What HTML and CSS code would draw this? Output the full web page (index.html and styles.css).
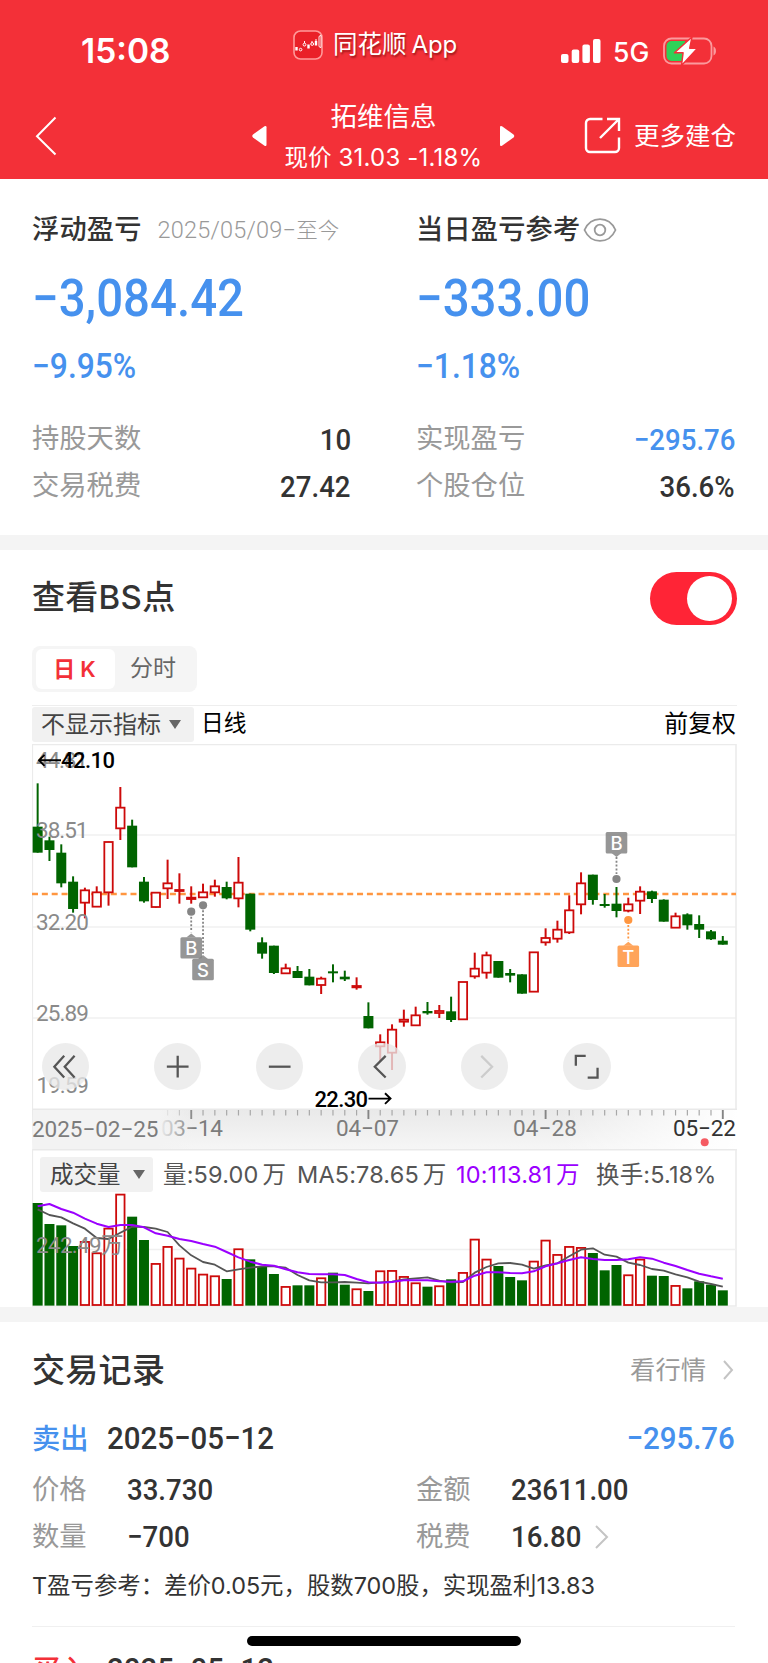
FILE: index.html
```html
<!DOCTYPE html>
<html lang="zh-CN">
<head>
<meta charset="utf-8">
<title>拓维信息</title>
<link rel="stylesheet" href="styles.css">
</head>
<body>
<div class="screen">
  <header class="top">
    <div class="status">
      <span class="clock">15:08</span>
      <div class="app">
        <svg class="app-icon" viewBox="0 0 30 30"><rect x="1" y="1" width="28" height="28" rx="6.5" fill="#ea2028" stroke="#ff9a9a" stroke-width="1.600"/><path d="M3.500 17v3.500M15.500 14.500v4M23 11v4.500" stroke="#fff" stroke-width="2.400"/><path d="M11.500 11v2M19 11v2M23 9v2" stroke="#fff" stroke-width="1"/><circle cx="7.600" cy="19.600" r="1.300" fill="none" stroke="#fff"/><circle cx="11.500" cy="14.600" r="1.400" fill="none" stroke="#fff"/><circle cx="19.200" cy="14" r="1.400" fill="none" stroke="#fff"/><path d="M26 7v9q0 1.500 2 1.500V5.500Q26 5.500 26 7" stroke="#fff" stroke-width=".9" fill="none"/></svg>
        <span>同花顺<b class="latin">App</b></span>
      </div>
      <svg class="signal" viewBox="0 0 40 24"><g fill="#fff"><rect x="0" y="15" width="7.500" height="9" rx="2"/><rect x="10.700" y="10.500" width="7.500" height="13.500" rx="2"/><rect x="21.400" y="5.500" width="7.500" height="18.500" rx="2"/><rect x="32" y="0" width="7.500" height="24" rx="2"/></g></svg>
      <span class="net">5G</span>
      <svg class="battery" viewBox="0 0 54 28"><rect x="1" y="1.500" width="47.500" height="25" rx="7.500" fill="none" stroke="#fb9a9d" stroke-width="1.800"/><path d="M50.500 9.500c3.300 1.400 3.300 7.600 0 9z" fill="#fb9a9d"/><path d="M8.500 4H22v20H8.500A5 5 0 0 1 3.500 19V9a5 5 0 0 1 5-5z" fill="#30d158"/><path d="M29 0 11.500 15.800h8.600L18.500 28.500l16-17.300h-7.800z" fill="#fff" stroke="#f33038" stroke-width="1.400" stroke-linejoin="round"/></svg>
    </div>
    <nav class="nav">
      <svg class="back" viewBox="0 0 22 40"><path d="M20.500 1.500 2 20.200l18.500 18.300" fill="none" stroke="#fff" stroke-width="2"/></svg>
      <svg class="prev" viewBox="0 0 17 22"><path d="M13.500 1.300 2 9.500q-1.500 1.500 0 3l11.500 8.200q2 1 2-1V2.300q0-2-2-1z" fill="#fff"/></svg>
      <div class="title"><div class="name">拓维信息</div><div class="price">现价<span class="latin"> 31.03 -1.18%</span></div></div>
      <svg class="next" viewBox="0 0 17 22"><path d="M3 1.300 14.500 9.500q1.500 1.500 0 3L3 20.700q-2 1-2-1V2.300q0-2 2-1z" fill="#fff"/></svg>
      <svg class="share" viewBox="0 0 38 38"><path d="M18.500 2H6a4 4 0 0 0-4 4v25a4 4 0 0 0 4 4h25a4 4 0 0 0 4-4V20.500M23 2h12v12M35 2 16 21" fill="none" stroke="#fff" stroke-width="2.400"/></svg>
      <span class="more">更多建仓</span>
    </nav>
  </header>

  <section class="summary">
    <div class="col">
      <div class="head"><span class="label">浮动盈亏</span><span class="period">2025/05/09−<span class="cjk">至今</span></span></div>
      <div class="big">−3,084.42</div>
      <div class="pct">−9.95%</div>
      <div class="kv first"><span>持股天数</span><b>10</b></div>
      <div class="kv"><span>交易税费</span><b>27.42</b></div>
    </div>
    <div class="col">
      <div class="head"><span class="label">当日盈亏参考</span><svg class="eye" viewBox="0 0 34 26"><path d="M1.500 13C8-1.500 26-1.500 32.500 13 26 27.500 8 27.500 1.500 13z" fill="none" stroke="#999" stroke-width="1.800"/><circle cx="17" cy="13" r="5.300" fill="none" stroke="#999" stroke-width="1.800"/></svg></div>
      <div class="big">−333.00</div>
      <div class="pct">−1.18%</div>
      <div class="kv first"><span>实现盈亏</span><b class="blue">−295.76</b></div>
      <div class="kv"><span>个股仓位</span><b>36.6%</b></div>
    </div>
  </section>

  <section class="bs">
    <div class="bs-head"><h2>查看BS点</h2><div class="toggle"><i></i></div></div>
    <div class="tabs"><span class="tab on">日<b>K</b></span><span class="tab">分时</span></div>
    <div class="bar">
      <span class="select">不显示指标<i class="caret"></i></span><span class="kind">日线</span><span class="adjust">前复权</span>
    </div>
    <div class="chart">
      <svg id="kline" width="705" height="405" viewBox="32 744 705 405"></svg>
      <div class="tools">
        <span class="tool"><svg viewBox="0 0 48 48"><path d="M22.500 13 12.500 24l10 11M33 13 23 24l10 11"/></svg></span>
        <span class="tool"><svg viewBox="0 0 48 48"><path d="M13 24h22M24 13v22"/></svg></span>
        <span class="tool"><svg viewBox="0 0 48 48"><path d="M13 24h22"/></svg></span>
        <span class="tool"><svg viewBox="0 0 48 48"><path d="M28 13 17 24l11 11"/></svg></span>
        <span class="tool off"><svg viewBox="0 0 48 48"><path d="M20.500 13 31.500 24l-11 11"/></svg></span>
        <span class="tool"><svg viewBox="0 0 48 48"><path d="M13 23V13h10M35 25v10H25"/></svg></span>
      </div>
    </div>
    <div class="volume">
      <svg id="vol" width="705" height="158" viewBox="32 1149 705 158"></svg>
      <div class="legend">
        <span class="select small">成交量<i class="caret"></i></span>
        <span class="l1">量:59.00<em>万</em></span><span class="l2">MA5:78.65<em>万</em></span><span class="l3">10:113.81<em>万</em></span><span class="l4">换手:5.18%</span>
      </div>
    </div>
  </section>

  <section class="records">
    <div class="rec-head"><h2>交易记录</h2><span class="link">看行情</span><svg class="chev" viewBox="0 0 12 20"><path d="M2 1l8 9-8 9"/></svg></div>
    <div class="deal"><span class="side">卖出</span><span class="date">2025−05−12</span><span class="gain">−295.76</span></div>
    <div class="pair"><div><span>价格</span><b>33.730</b></div><div><span>金额</span><b>23611.00</b></div></div>
    <div class="pair"><div><span>数量</span><b>−700</b></div><div><span>税费</span><b class="fee">16.80</b><svg class="chev big-chev" viewBox="0 0 15 24"><path d="M2 1l11 11L2 23"/></svg></div></div>
    <p class="note">T盈亏参考：差价0.05元，股数700股，实现盈利13.83</p>
    <div class="deal next-deal"><span class="side buy">买入</span><span class="date">2025−05−12</span></div>
  </section>
  <div class="home"></div>
</div>
<script src="chart.js"></script>
</body>
</html>
```

FILE: chart.js
```js
// Each candle: direction, high, body top, body bottom, low (thirds of a pixel below the chart origin)
const candles = [
['g',145,275,353,353],['g',305,316,345,378],['g',328,353,445,457],['g',424,440,522,533],['r',458,466,503,550],
['r',454,472,515,515],['r',320,321,472,512],['r',156,218,280,315],['g',254,272,397,397],['g',426,440,499,503],
['r',472,473,516,518],['r',374,445,460,492],['r',415,465,468,506],['r',454,488,492,506],['r',446,472,487,489],
['r',434,454,472,485],['g',440,456,490,493],['r',366,443,490,517],['g',476,476,584,589],['g',607,622,656,671],
['g',632,632,714,717],['r',686,700,715,715],['g',693,708,729,729],['g',702,725,751,751],['r',725,731,750,777],
['g',688,709,715,742],['g',707,725,733,738],['r',727,753,757,764],['g',802,843,880,880],['r',898,922,934,980],
['r',868,884,953,1005],['r',824,854,860,875],['r',815,841,871,871],['g',801,828,835,839],['r',810,828,834,849],
['g',785,829,855,861],['r',741,741,853,853],['r',653,701,724,731],['r',650,661,713,731],['g',678,678,728,728],
['g',702,714,722,742],['g',718,718,776,776],['r',651,652,770,770],['r',580,609,622,632],['r',557,584,611,623],
['r',481,526,592,597],['r',412,445,508,538],['g',419,419,495,509],['g',477,507,513,518],['g',456,506,528,547],
['r',488,508,527,532],['r',454,470,497,537],['g',467,469,492,504],['g',493,494,560,560],['r',533,544,578,578],
['g',535,538,571,584],['g',541,567,584,609],['g',585,589,613,615],['g',603,617,629,629]];
const volTop = [189,252,256,318,304,338,264,162,230,300,370,319,354,384,402,407,417,326,358,378,402,439,436,436,413,398,434,446,453,392,391,409,428,440,437,418,397,297,357,378,411,421,363,300,343,319,322,339,391,375,404,357,407,408,436,445,424,434,451];
const ma5 = [208,225,232,250,266,294,297,278,260,261,266,276,316,346,366,374,394,388,383,379,379,383,405,421,427,427,426,428,430,427,425,418,415,412,422,427,426,398,381,370,369,374,386,376,370,349,329,325,344,350,368,375,387,392,403,412,425,432,440];
const ma10 = [199,192,207,218,236,251,261,255,255,262,280,287,297,303,312,320,336,352,365,374,377,388,397,402,403,403,405,417,427,428,426,421,421,421,424,425,424,407,397,397,399,400,394,379,370,360,352,357,360,360,358,352,356,368,378,390,401,409,416];

const GREEN = '#006400', RED = '#cd0a0a';
const cx = i => +(37.65 + i * 11.813).toFixed(2);
const py = v => +(735 + v / 3).toFixed(2);
const vy = v => +(1140 + v / 3).toFixed(2);
const line = (x1, y1, x2, y2, s, w = 1.5, extra = '') => `<line x1="${x1}" y1="${y1}" x2="${x2}" y2="${y2}" stroke="${s}" stroke-width="${w}" ${extra}/>`;
const text = (x, y, w, s, cls) => `<text x="${x}" y="${y}" textLength="${w}" class="${cls}">${s}</text>`;

let k = `<defs>
<linearGradient id="axv" x1="0" y1="0" x2="0" y2="1"><stop offset="0" stop-color="#e9e9e9"/><stop offset="1" stop-color="#f6f6f6"/></linearGradient>
<linearGradient id="fadeL"><stop offset="0" stop-color="#f3f3f3"/><stop offset=".78" stop-color="#f3f3f3"/><stop offset="1" stop-color="#f3f3f3" stop-opacity="0"/></linearGradient>
<linearGradient id="fadeR"><stop offset="0" stop-color="#fff" stop-opacity="0"/><stop offset="1" stop-color="#fff"/></linearGradient></defs>`;
k += '<rect x="32" y="1109" width="705" height="41" fill="url(#axv)"/>';
k += '<rect x="560" y="1109" width="177" height="41" fill="url(#fadeR)"/>';
for (const y of [835, 927, 1018]) k += line(32, y, 736, y, '#f1f1f1', 1.7);
k += '<path d="M32.300 1109.500V744.500H736V1109.500" fill="none" stroke="#ebebeb" stroke-width="1.600"/>' + line(32, 1109.3, 737, 1109.3, '#e9e9e9', 1.5);
k += line(32, 894, 736, 894, '#ff9640', 2.3, 'stroke-dasharray="6 3.85"');
candles.forEach(([c, h, t, b, l], i) => {
  const x = cx(i);
  if (c === 'g') {
    k += line(x, py(h), x, py(l), GREEN, 2);
    k += `<rect x="${x - 5}" y="${py(t)}" width="10" height="${Math.max((b - t) / 3, 1.8)}" fill="${GREEN}"/>`;
  } else {
    if (h < t) k += line(x, py(h), x, py(t), RED, 2);
    if (l > b) k += line(x, py(b), x, py(l), RED, 2);
    k += `<rect x="${x - 4.2}" y="${py(t)}" width="8.400" height="${(b - t) / 3}" fill="#fff" stroke="${RED}" stroke-width="1.800"/>`;
  }
});
k += text(36, 768, 52, '44.81', 'lab') + text(36, 838.2, 52.5, '38.51', 'lab') + text(36, 930, 53, '32.20', 'lab') + text(36, 1021.2, 53, '25.89', 'lab') + text(36.5, 1093.3, 52.5, '19.59', 'lab');
k += '<path d="M61 760.300H39M44.500 754.800 39 760.300l5.500 5.500" fill="none" stroke="#000" stroke-width="1.900"/>' + text(61, 768.3, 54, '42.10', 'ext');
k += '<path d="M368.500 1098.600H390.500M385 1093.300l5.500 5.300-5.500 5.300" fill="none" stroke="#000" stroke-width="1.900"/>' + text(314.5, 1106.9, 53.5, '22.30', 'ext');

const marker = (x, dotY, boxY, ch, color, down) => {
  const from = down ? boxY + 25 : dotY + 5, to = down ? dotY - 5 : boxY - 5;
  const tip = down ? `M${x - 5} ${boxY + 21}l5 4 5-4z` : `M${x - 5} ${boxY + .2}l5-4 5 4z`;
  return `<circle cx="${x}" cy="${dotY}" r="4.100" fill="${color}"/>` + line(x, from, x, to, color, 1.8, 'stroke-dasharray="2 1.8"') +
    `<g opacity=".86"><rect x="${x - 10.8}" y="${boxY}" width="21.600" height="21.400" rx="1.500" fill="${color}"/><path d="${tip}" fill="${color}"/></g><text x="${x}" y="${boxY + 18}" text-anchor="middle" class="tag">${ch}</text>`;
};
k += marker(cx(13), 911.7, 937.2, 'B', '#858585') + marker(cx(14), 905.3, 958.8, 'S', '#858585');
k += marker(cx(49), 879, 832, 'B', '#858585', true) + marker(cx(50), 920, 945.6, 'T', '#ff9640');

for (let i = 11; i < 59; i++) {
  const major = (i - 13) % 15 === 0 || i === 58;
  k += line(cx(i), 1110, cx(i), major ? 1119 : 1115.5, major ? '#858585' : '#a8a8a8', major ? 1.9 : 1.2);
}
k += text(161, 1136.3, 62, '03−14', 'axis') + '<rect x="33" y="1110" width="161" height="40" fill="url(#fadeL)"/>' + text(32, 1136.6, 126.500, '2025−02−25', 'axis');
k += text(336, 1136.3, 63, '04−07', 'axis') + text(513, 1136.3, 64, '04−28', 'axis') + text(673, 1136.3, 63, '05−22', 'axis dark');
k += '<circle cx="704.700" cy="1142.300" r="4" fill="#f55b62"/>';
document.getElementById('kline').innerHTML = k;

let v = line(32, 1149.7, 737, 1149.7, '#e9e9e9', 1.5) + '<path d="M32.300 1149V1306H736V1149" fill="none" stroke="#ebebeb" stroke-width="1.600"/>' + line(32, 1249.4, 736, 1249.4, '#f0f0f0', 1.5);
volTop.forEach((t, i) => {
  const x = cx(i), green = candles[i][0] === 'g';
  v += green ? `<rect x="${x - 5}" y="${vy(t)}" width="10" height="${1305.6 - vy(t)}" fill="${GREEN}"/>`
    : `<rect x="${x - 4.2}" y="${vy(t) + .6}" width="8.400" height="${1304.4 - vy(t)}" fill="#fff" stroke="${RED}" stroke-width="1.800"/>`;
});
const poly = (a, c, w) => `<polyline points="${a.map((t, i) => cx(i) + ',' + vy(t)).join(' ')}" fill="none" stroke="${c}" stroke-width="${w}" stroke-linejoin="round"/>`;
v += poly(ma5, '#555', 1.8) + poly(ma10, '#9b00ff', 2) + text(36, 1253.3, 87.500, '242.49万', 'lab');
document.getElementById('vol').innerHTML = v;
```

FILE: styles.css
```css
* { box-sizing: border-box; }
body { margin: 0; background: #fff; }
.screen { position: relative; width: 768px; height: 1663px; overflow: hidden; font-family: Roboto, "Noto Sans CJK SC", sans-serif; color: #333; white-space: nowrap; }
h2, p { margin: 0; }
svg { display: block; flex: none; }
.latin { font-family: Inter, sans-serif; font-weight: 400; }

.top { height: 179px; background: #f33038; color: #fff; font-family: Inter, "Noto Sans CJK SC", sans-serif; }
.status { display: flex; height: 90px; padding-left: 81px; }
.clock { width: 212px; padding-top: 31px; font-size: 33.500px; line-height: 40px; font-weight: 600; }
.app { display: flex; width: 268px; padding-top: 29px; font-size: 24.500px; line-height: 31px; text-shadow: 1px 2px 2px rgba(90, 0, 0, .55); }
.app-icon { width: 30px; height: 30px; margin: 1px 10px 0 0; }
.app .latin { margin-left: 5px; font-size: 24px; letter-spacing: -0.100px; }
.signal { width: 40px; height: 24px; margin: 39px 12px 0 0; }
.net { width: 50px; padding-top: 37px; font-size: 26.500px; line-height: 31px; font-weight: 500; }
.battery { width: 54px; height: 28px; margin-top: 37px; }
.nav { display: flex; height: 89px; padding-left: 35px; }
.back { width: 22px; height: 40px; margin: 25.500px 194px 0 0; }
.prev, .next { width: 17px; height: 22px; margin-top: 35px; }
.title { width: 231px; text-align: center; }
.name { padding-top: 6px; font-size: 26.500px; line-height: 40px; }
.price { font-size: 23.500px; line-height: 36px; margin: 4px -5px 0; }
.price .latin { font-size: 24px; white-space: pre; letter-spacing: 0.200px; }
.share { width: 38px; height: 38px; margin: 27px 0 0 68px; }
.more { margin-left: 12px; padding-top: 27px; font-size: 25.500px; line-height: 38px; }

.summary { display: flex; height: 371px; border-bottom: 15px solid #f4f4f4; padding: 30px 33px 0 32px; }
.col { width: 319px; margin-right: 65px; }
.col + .col { margin-right: 0; }
.head { display: flex; height: 42px; line-height: 43px; align-items: center; }
.label { font-size: 27.200px; font-weight: 500; letter-spacing: 0.200px; }
.period { margin-left: 16px; font-size: 23.500px; font-weight: 300; color: #999; letter-spacing: 0.200px; }
.cjk { font-size: 21.500px; }
.eye { width: 34px; height: 26px; margin-left: 3px; }
.big, .pct, .date, .pair b { transform: scaleX(.92); transform-origin: left; }
.gain, .kv b { transform: scaleX(.92); transform-origin: right; }
.big { height: 78px; margin-top: 9px; font-size: 51.500px; line-height: 78px; font-weight: 500; color: #4691ee; }
.pct { height: 50px; margin-top: 3px; font-size: 34.500px; line-height: 50px; font-weight: 500; color: #4691ee; }
.kv { display: flex; justify-content: space-between; height: 47px; line-height: 47px; font-size: 27.300px; color: #999; }
.kv.first { margin-top: 25px; }
.kv b { font-size: 30px; font-weight: 500; color: #333; }
.kv .blue { color: #4691ee; }

.bs { height: 772px; border-bottom: 15px solid #f4f4f4; padding: 22px 31px 0 32px; }
.bs-head { display: flex; justify-content: space-between; height: 74px; }
h2 { font-size: 33px; line-height: 51px; font-weight: 500; letter-spacing: 0.300px; font-family: Inter, "Noto Sans CJK SC", sans-serif; }
.toggle { width: 87px; height: 53px; border-radius: 27px; background: #ff2436; padding: 4px 5px; display: flex; justify-content: flex-end; }
.toggle i { width: 45px; height: 45px; border-radius: 50%; background: #fff; }
.tabs { display: flex; width: 165px; height: 46px; border-radius: 8px; background: #f5f5f5; padding: 3px 4px; }
.tab { flex: 1; text-align: center; font-size: 23px; line-height: 40px; color: #666; padding-right: 2px; }
.tab.on { flex: none; width: 79px; border-radius: 6px; background: #fff; color: #f33038; font-weight: 700; font-family: Inter, "Noto Sans CJK SC", sans-serif; font-size: 22px; }
.tab b { margin-left: 5px; font-weight: 600; }
.bar { display: flex; height: 39px; margin-top: 13px; border-top: 1.500px solid #eee; padding-top: 1px; color: #000; font-size: 23.900px; line-height: 34px; }
.select { display: flex; align-items: center; width: 162px; height: 35px; border-radius: 3px; background: #f1f1f1; color: #444; padding-left: 9px; font-size: 24px; }
.caret { margin-left: 8px; border: 6px solid transparent; border-top: 9px solid #666; border-bottom: 0; }
.kind { margin-left: 7px; font-size: 22.700px; }
.adjust { margin: 0 1px 0 auto; }
.chart { position: relative; height: 405px; }
.tools { position: absolute; left: 10px; top: 298.600px; display: flex; gap: 55px; }
.tool { width: 47.400px; height: 47.400px; border-radius: 50%; background: rgba(232, 232, 232, .78); }
.tool:first-child { margin-right: 9.300px; }
.tool path { fill: none; stroke: #555; stroke-width: 2.300; }
.tool.off path { stroke: #ccc; }
.volume { position: relative; height: 158px; }
.legend { position: absolute; left: 8px; top: 8px; display: flex; line-height: 36px; font-family: Inter, "Noto Sans CJK SC", sans-serif; font-size: 23.500px; color: #555; }
.legend em { font-style: normal; margin-left: 4px; }
.legend > span { flex: none; }
.legend > span + span { letter-spacing: 0.150px; }
.small { width: 113px; padding-left: 10px; font-size: 23.500px; margin-right: 10px; }
.small .caret { margin-left: 12px; }
.l1 { width: 134px; } .l2 { width: 159px; } .l3 { width: 140px; color: #9b00ff; }
.lab { font: 400 22.500px Roboto, "Noto Sans CJK SC", sans-serif; fill: #8a8a8a; }
.ext { font: 500 22px Roboto, sans-serif; fill: #000; }
.axis { font: 400 22.500px Roboto, sans-serif; fill: #7c7c7c; }
.axis.dark { fill: #333; }
.tag { font: 500 18.500px Inter, sans-serif; fill: #fff; }

.records { padding: 20px 33px 0 32px; }
.rec-head { display: flex; height: 56px; line-height: 57px; align-items: center; }
.rec-head h2 { line-height: 56px; }
.link { margin-left: auto; font-size: 25.300px; color: #999; }
.chev { width: 12px; height: 20px; margin: 0 1px 0 16px; }
.chev path { fill: none; stroke: #c4c4c4; stroke-width: 2; }
.deal { display: flex; height: 40px; margin-top: 20px; line-height: 40px; font-size: 32px; font-weight: 500; }
.side { width: 75px; font-size: 28.300px; line-height: 43px; color: #4691ee; }
.side.buy { color: #f33038; }
.gain { margin-left: auto; color: #4691ee; }
.pair { display: grid; grid-template-columns: 384px 1fr; height: 47px; line-height: 48px; }
.deal + .pair { margin-top: 8px; }
.pair div { display: flex; align-items: center; }
.pair span { width: 94.500px; font-size: 27.300px; color: #999; }
.pair b { font-size: 30px; font-weight: 500; }
.big-chev { width: 15px; height: 24px; margin-left: 7px; }
.note { height: 67px; border-bottom: 1.500px solid #f0f0f0; font: 400 23.400px/51px Inter, "Noto Sans CJK SC", sans-serif; }
.next-deal { margin-top: 22px; }
.home { position: absolute; left: 247px; top: 1636px; width: 274px; height: 10px; border-radius: 5px; background: #000; }
```
